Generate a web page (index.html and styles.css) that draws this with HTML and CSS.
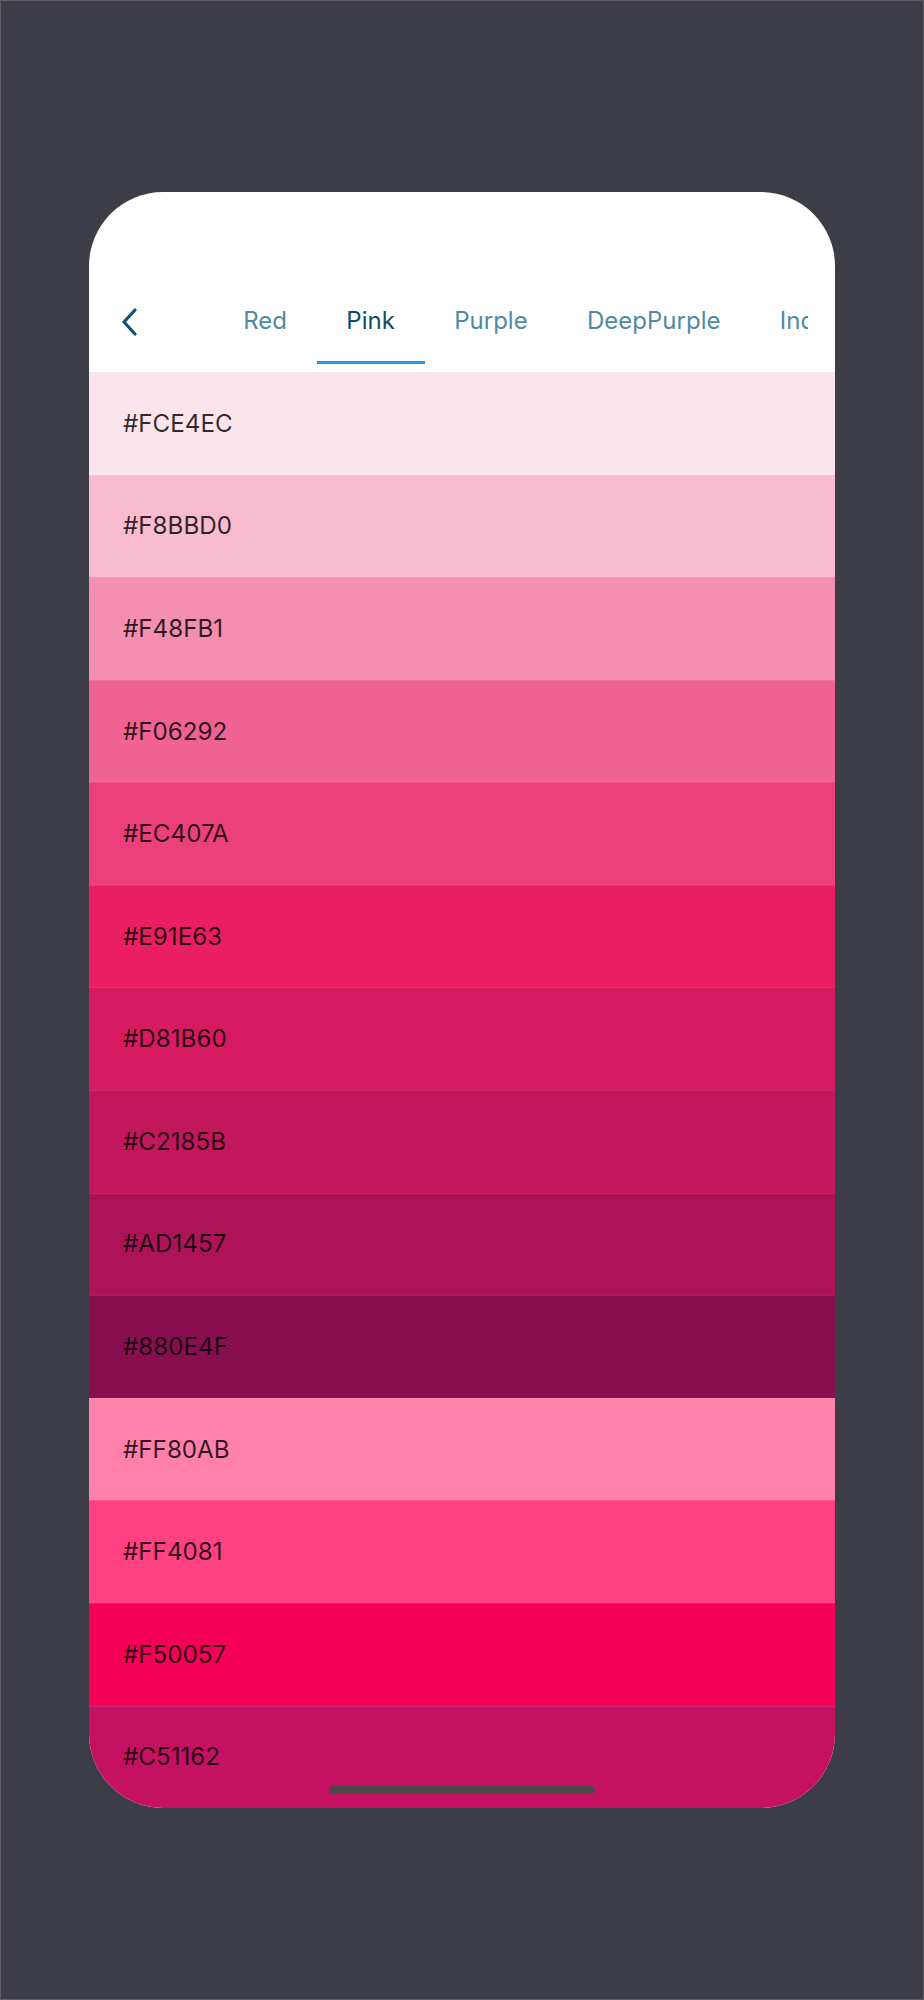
FILE: index.html
```html
<!DOCTYPE html>
<html lang="en">
<head>
<meta charset="utf-8">
<title>Pink palette</title>
<link rel="stylesheet" href="styles.css">
</head>
<body>
<div class="phone">
  <div class="status"></div>
  <nav class="nav">
    <button class="back" aria-label="Back">
      <svg width="18" height="28" viewBox="0 0 18 28"><path d="M14 2 L3 14 L14 26" fill="none" stroke="currentColor" stroke-width="3.2" stroke-linecap="round" stroke-linejoin="round"/></svg>
    </button>
    <div class="tabs">
      <div class="tab">Red</div>
      <div class="tab active">Pink</div>
      <div class="tab">Purple</div>
      <div class="tab">DeepPurple</div>
      <div class="tab">Indigo</div>
    </div>
  </nav>
  <div class="list">
    <div class="row" style="background:#FCE4EC">#FCE4EC</div>
    <div class="row" style="background:#F8BBD0">#F8BBD0</div>
    <div class="row" style="background:#F48FB1">#F48FB1</div>
    <div class="row" style="background:#F06292">#F06292</div>
    <div class="row" style="background:#EC407A">#EC407A</div>
    <div class="row" style="background:#E91E63">#E91E63</div>
    <div class="row" style="background:#D81B60">#D81B60</div>
    <div class="row" style="background:#C2185B">#C2185B</div>
    <div class="row" style="background:#AD1457">#AD1457</div>
    <div class="row" style="background:#880E4F">#880E4F</div>
    <div class="row" style="background:#FF80AB">#FF80AB</div>
    <div class="row" style="background:#FF4081">#FF4081</div>
    <div class="row" style="background:#F50057">#F50057</div>
    <div class="row" style="background:#C51162">#C51162</div>
  </div>
  <div class="home-indicator"></div>
</div>
</body>
</html>
```
FILE: styles.css
```css
* { box-sizing: border-box; }
html, body { margin: 0; padding: 0; }
body {
  width: 924px;
  height: 2000px;
  background: #3d3d47;
  border: 1px solid #5e5e64;
  padding: 191px 0 0 88px;
  font-family: Inter, "Noto Sans", sans-serif;
}
.phone {
  position: relative;
  width: 746px;
  height: 1616px;
  border-radius: 74px;
  overflow: hidden;
  background: #fff;
  display: flex;
  flex-direction: column;
}
.status { height: 88px; flex: none; }
.nav {
  height: 92px;
  flex: none;
  display: flex;
  align-items: stretch;
  padding-right: 27px;
}
.back {
  flex: none;
  width: 124.5px;
  border: 0;
  background: none;
  padding: 0 0 0 32px;
  margin: 0;
  color: #0f5374;
  display: flex;
  align-items: flex-start;
  padding-top: 28px;
}
.tabs {
  flex: 1;
  display: flex;
  overflow: hidden;
  white-space: nowrap;
}
.tab {
  flex: none;
  padding: 26px 29.7px 0;
  font-size: 24px;
  color: #4f8aa1;
  position: relative;
  height: 84px;
  border-bottom: 3px solid transparent;
}
.tab.active {
  color: #0e4e6c;
  border-bottom-color: #2196f3;
}
.list {
  flex: 1;
  display: flex;
  flex-direction: column;
}
.row {
  flex: 1;
  display: flex;
  align-items: center;
  padding-left: 34px;
  font-size: 24.2px;
  color: rgba(0, 0, 0, 0.82);
  box-shadow: inset 0 1px 0 rgba(255, 255, 255, 0.1);
}
.row:first-child { box-shadow: none; }
.home-indicator {
  position: absolute;
  left: 50%;
  bottom: 14px;
  width: 266px;
  height: 8px;
  margin-left: -133px;
  border-radius: 4px;
  background: #4a4a4a;
}
```
